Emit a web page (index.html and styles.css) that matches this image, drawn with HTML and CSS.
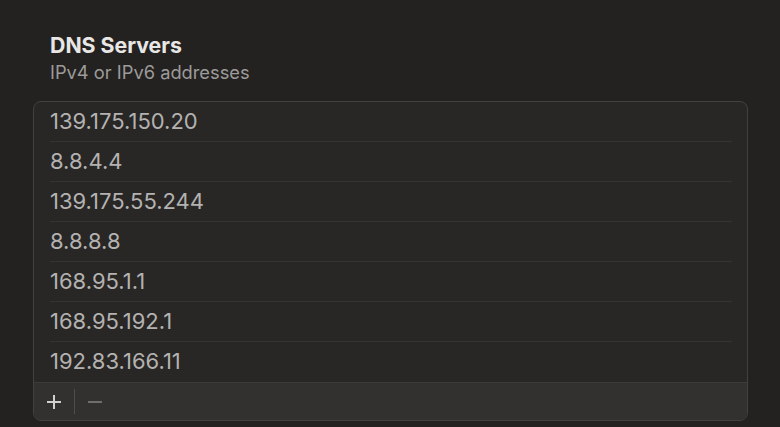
FILE: index.html
```html
<!DOCTYPE html>
<html lang="en">
<head>
    <meta charset="UTF-8">
    <meta name="viewport" content="width=device-width, initial-scale=1.0">
    <title>DNS Servers</title>
    <link rel="stylesheet" href="styles.css">
</head>
<body>
    <section class="dns-panel">
        <header class="dns-header">
            <h1>DNS Servers</h1>
            <p>IPv4 or IPv6 addresses</p>
        </header>

        <div class="dns-list">
            <ul class="dns-rows">
                <li>139.175.150.20</li>
                <li>8.8.4.4</li>
                <li>139.175.55.244</li>
                <li>8.8.8.8</li>
                <li>168.95.1.1</li>
                <li>168.95.192.1</li>
                <li>192.83.166.11</li>
            </ul>

            <div class="dns-footer">
                <button class="tool add" title="Add">
                    <svg width="16" height="16" viewBox="0 0 16 16"><path d="M8 1v14M1 8h14" stroke="currentColor" stroke-width="2"/></svg>
                </button>
                <span class="tool-sep"></span>
                <button class="tool remove" title="Remove" disabled>
                    <svg width="16" height="16" viewBox="0 0 16 16"><path d="M1 8h14" stroke="currentColor" stroke-width="2"/></svg>
                </button>
            </div>
        </div>
    </section>
</body>
</html>
```

FILE: styles.css
```css
body, html {
    margin: 0;
    padding: 0;
    background-color: #232221;
    font-family: Inter, "Liberation Sans", Arial, sans-serif;
    color: #e6e5e3;
}

/* Panel */
.dns-panel {
    padding: 32px 32px 6px 33px;
}

.dns-header {
    padding-left: 17px;
    margin-bottom: 18px;
}

.dns-header h1 {
    font-size: 21.3px;
    font-weight: 700;
    margin: 0;
    line-height: 26px;
    color: #e8e7e5;
}

.dns-header p {
    font-size: 18.3px;
    margin: 3px 0 0;
    line-height: 22px;
    color: #9d9b99;
}

/* List box */
.dns-list {
    background-color: #282726;
    border: 1px solid #424140;
    border-radius: 8px;
    overflow: hidden;
}

.dns-rows {
    list-style: none;
    margin: 0;
    padding: 0 15px 0 16px;
}

.dns-rows li {
    height: 39px;
    line-height: 39px;
    font-size: 22px;
    color: #b4b2b0;
    border-bottom: 1px solid #353433;
}

.dns-rows li:last-child {
    border-bottom: none;
    height: 40px;
}

/* Footer */
.dns-footer {
    display: flex;
    align-items: center;
    height: 37px;
    padding-left: 8px;
    background-color: #323130;
    border-top: 1px solid #3c3b3a;
}

.tool {
    background: none;
    border: none;
    padding: 0 4px;
    display: flex;
    align-items: center;
    color: #d2d0ce;
}

.tool.remove {
    color: #706e6c;
    margin-left: 8px;
}

.tool-sep {
    width: 1px;
    height: 25px;
    margin-left: 8px;
    background-color: #4e4d4c;
}
```
